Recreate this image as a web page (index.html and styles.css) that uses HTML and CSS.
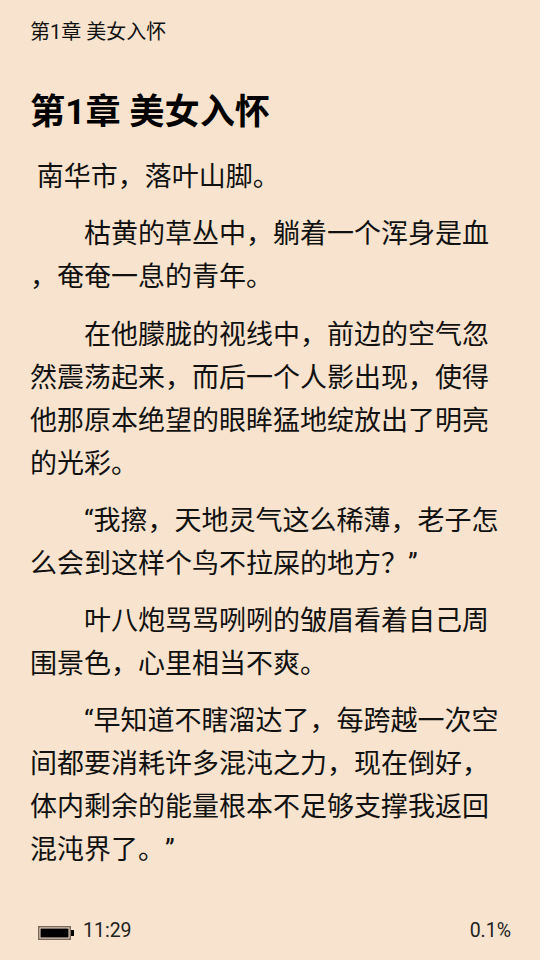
FILE: index.html
```html
<!DOCTYPE html>
<html lang="zh-CN">
<head>
<meta charset="utf-8">
<title>第1章 美女入怀</title>
<link rel="stylesheet" href="styles.css">
</head>
<body>
<div class="page">
  <header class="running-head">第1章 美女入怀</header>
  <main class="content">
    <h1 class="title">第1章 美女入怀</h1>
    <p class="first">&nbsp;南华市，落叶山脚。</p>
    <p class="para"><span class="line ind">枯黄的草丛中，躺着一个浑身是血</span><span class="line">，奄奄一息的青年。</span></p>
    <p class="para"><span class="line ind">在他朦胧的视线中，前边的空气忽</span><span class="line">然震荡起来，而后一个人影出现，使得</span><span class="line">他那原本绝望的眼眸猛地绽放出了明亮</span><span class="line">的光彩。</span></p>
    <p class="para"><span class="line ind">“我擦，天地灵气这么稀薄，老子怎</span><span class="line">么会到这样个鸟不拉屎的地方？”</span></p>
    <p class="para"><span class="line ind">叶八炮骂骂咧咧的皱眉看着自己周</span><span class="line">围景色，心里相当不爽。</span></p>
    <p class="para"><span class="line ind">“早知道不瞎溜达了，每跨越一次空</span><span class="line">间都要消耗许多混沌之力，现在倒好，</span><span class="line">体内剩余的能量根本不足够支撑我返回</span><span class="line">混沌界了。”</span></p>
  </main>
  <footer class="status">
    <div class="status-left">
      <svg class="battery" viewBox="0 0 36 14" width="36" height="14" aria-hidden="true"><rect x="0.75" y="0.75" width="31.5" height="12.5" fill="none" stroke="#7a6a5c" stroke-width="1.5"/><rect x="2.5" y="2.5" width="28" height="9" fill="#000"/><rect x="33" y="4" width="3" height="6" fill="#000"/></svg>
      <span>11:29</span>
    </div>
    <span>0.1%</span>
  </footer>
</div>
</body>
</html>
```
FILE: styles.css
```css
html, body { margin: 0; padding: 0; }
body { background: #f8e4ce; color: #111; font-family: Roboto, "Noto Sans CJK SC", sans-serif; font-kerning: none; text-spacing-trim: space-all; font-feature-settings: "palt" 0, "chws" 0, "halt" 0; }
.page { width: 540px; height: 960px; display: flex; flex-direction: column; overflow: hidden; }
.running-head { font-size: 20px; line-height: 28px; padding: 18px 30px 0; }
.content { flex: 1; padding: 0 30px; }
.title { font-size: 35.2px; line-height: 48px; font-weight: 700; margin: 42px 0 0; color: #000; }
.first { font-size: 27px; line-height: 43px; margin: 20px 0 0; }
.para { font-size: 27px; line-height: 43px; margin: 14.25px 0 0; }
.line { display: block; white-space: nowrap; }
.ind { padding-left: 54px; }
.status { display: flex; justify-content: space-between; align-items: center; padding: 0 29px 17px 38px; font-size: 19.5px; line-height: 24px; color: #222; }
.status-left { display: flex; align-items: center; gap: 9px; }
.battery { display: block; margin-top: 4px; }
```
